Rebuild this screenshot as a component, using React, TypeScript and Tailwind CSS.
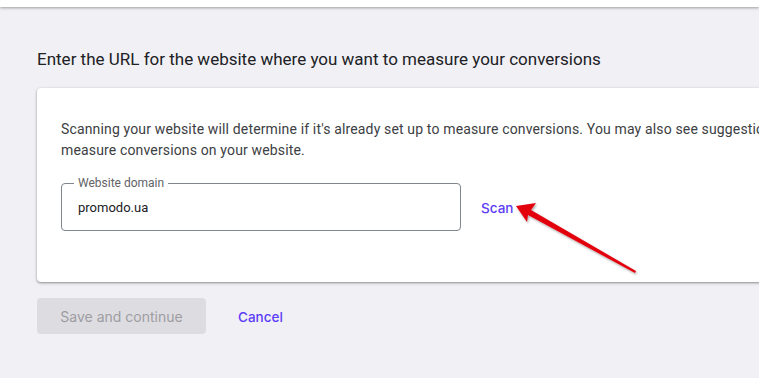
import React from "react";

export default function App() {
  return (
    <div className="relative w-[759px] h-[378px] overflow-hidden bg-[#f1f0f5]" style={{ fontFamily: "Roboto, 'Liberation Sans', sans-serif" }}>
      <div className="h-[7px] bg-white shadow-[0_1px_3px_rgba(0,0,0,0.35)]" />
      <div className="pl-[37px] pt-[41px]">
        <h1 className="text-[17px] leading-[22px] text-[#202124]" style={{ fontFamily: "Roboto, sans-serif" }}>
          Enter the URL for the website where you want to measure your conversions
        </h1>
        <div className="mt-[18px] w-[800px] h-[194px] bg-white rounded-[4px] shadow-[0_1px_2px_rgba(0,0,0,0.3),0_1px_3px_1px_rgba(0,0,0,0.1)] px-[24px] pt-[31px]">
          <p className="text-[14px] leading-[21px] text-[#3c4043] tracking-[0.15px]">
            Scanning your website will determine if it's already set up to measure conversions. You may also see suggestions to
            <br />
            measure conversions on your website.
          </p>
          <div className="flex items-center mt-[22px]">
            <div className="relative w-[400px] h-[48px] border border-[#80868b] rounded-[4px] flex items-center pl-[16px]">
              <span className="absolute -top-[9px] left-[12px] bg-white px-[4px] text-[12px] leading-[16px] text-[#5f6368]">
                Website domain
              </span>
              <span className="text-[13px] text-[#202124] mt-[2px]">promodo.ua</span>
            </div>
            <span className="ml-[20px] mt-[2px] text-[13.5px] font-medium text-[#5c3df5]" style={{ fontFamily: "Inter, sans-serif" }}>
              Scan
            </span>
          </div>
        </div>
        <div className="flex items-center mt-[16px]">
          <div className="w-[169px] h-[36px] rounded-[4px] bg-[#dddce1] flex items-center justify-center text-[14px] text-[#9d9ca2]" style={{ fontFamily: "Inter, sans-serif" }}>
            Save and continue
          </div>
          <span className="ml-[32px] mt-[2px] text-[13.5px] font-medium text-[#5c3df5]" style={{ fontFamily: "Inter, sans-serif" }}>
            Cancel
          </span>
        </div>
      </div>
      <svg className="absolute left-0 top-0" width="759" height="378" viewBox="0 0 759 378">
        <defs>
          <filter id="sh" x="-20%" y="-20%" width="140%" height="140%">
            <feDropShadow dx="1" dy="1.5" stdDeviation="1" floodColor="#000" floodOpacity="0.35" />
          </filter>
        </defs>
        <polygon
          filter="url(#sh)"
          fill="#e3000f"
          points="516,206 536,203 531,210 636,271 635,273 528,215 527,222"
        />
      </svg>
    </div>
  );
}
